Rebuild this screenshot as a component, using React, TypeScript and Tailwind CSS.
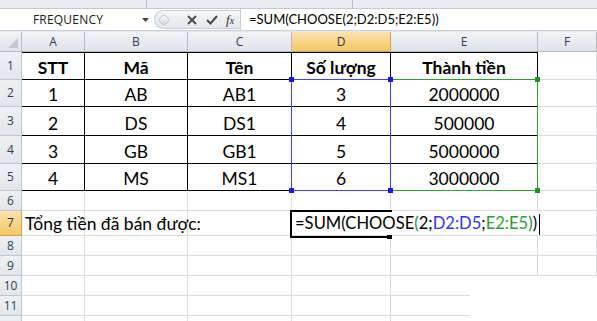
import React from "react";

const cols = [63, 103, 104, 99, 147, 59];
const colNames = ["A", "B", "C", "D", "E", "F"];

type Row = { n: number; h: number; cells?: string[]; bold?: boolean; hideLabel?: boolean };
const rows: Row[] = [
  { n: 1, h: 28, cells: ["STT", "Mã", "Tên", "Số lượng", "Thành tiền"], bold: true },
  { n: 2, h: 27, cells: ["1", "AB", "AB1", "3", "2000000"] },
  { n: 3, h: 29, cells: ["2", "DS", "DS1", "4", "500000"] },
  { n: 4, h: 28, cells: ["3", "GB", "GB1", "5", "5000000"] },
  { n: 5, h: 27, cells: ["4", "MS", "MS1", "6", "3000000"] },
  { n: 6, h: 20 },
  { n: 7, h: 25 },
  { n: 8, h: 20 },
  { n: 9, h: 20 },
  { n: 10, h: 20 },
  { n: 11, h: 20 },
  { n: 12, h: 20, hideLabel: true },
];

const BLUE = "#4141ff";
const GREEN = "#2f9e36";

function Corner({ x, y, c }: { x: number; y: number; c: string }) {
  return (
    <div
      className="absolute z-40 w-[5px] h-[5px]"
      style={{ left: x - 2, top: y - 2, background: c }}
    />
  );
}

function HLine({ x, y, w, c }: { x: number; y: number; w: number; c: string }) {
  return <div className="absolute z-30 h-[1px]" style={{ left: x, top: y, width: w, background: c }} />;
}
function VLine({ x, y, h, c }: { x: number; y: number; h: number; c: string }) {
  return <div className="absolute z-30 w-[1px]" style={{ left: x, top: y, height: h, background: c }} />;
}

function cellStyle(n: number, i: number, inTable: boolean): React.CSSProperties {
  if (!inTable) {
    return { borderRight: "1px solid #dadcdf", borderBottom: "1px solid #dadcdf" };
  }
  const s: React.CSSProperties = {
    borderRight: "1px solid #000",
    borderBottom: "1px solid #000",
  };
  if (n === 1) s.borderTop = "1px solid #000";
  return s;
}

export default function App() {
  return (
    <div className="relative w-[597px] h-[321px] overflow-hidden bg-white font-['Lato',sans-serif] text-black">
      {/* ribbon bottom strip */}
      <div className="flex h-[9px] bg-[#e9ecf0] border-b border-[#c3cad3]">
        <div className="w-[147px] border-r border-[#b6bec8]" />
        <div className="w-[206px] border-r border-[#b6bec8]" />
      </div>
      {/* formula bar */}
      <div className="flex h-[22px] items-center bg-white border-b border-[#c9d0d8]">
        <div className="w-[136px] text-center text-[12px] text-[#1c1c1c] font-['Open_Sans',sans-serif] tracking-[0.2px]">
          FREQUENCY
        </div>
        <div className="w-[18px] flex items-center justify-center">
          <svg width="7" height="4" viewBox="0 0 7 4">
            <path d="M0 0H7L3.5 4Z" fill="#444" />
          </svg>
        </div>
        <div className="h-[19px] w-[86px] flex items-center rounded-l-full bg-gradient-to-b from-[#f4f6f8] to-[#e3e7ec] border border-[#c8ced6] border-r-0">
          <div className="ml-[4px] w-[10px] h-[10px] rounded-full bg-gradient-to-b from-[#f7f8fa] to-[#d3d8de] border border-[#c5cbd3]" />
          <svg className="ml-[18px]" width="10" height="10" viewBox="0 0 10 10">
            <path d="M1 1L9 9M9 1L1 9" stroke="#4b4b4b" strokeWidth="1.8" />
          </svg>
          <svg className="ml-[9px]" width="12" height="10" viewBox="0 0 12 10">
            <path d="M1 5L4.5 8.5L11 1" stroke="#4b4b4b" strokeWidth="2" fill="none" />
          </svg>
          <span className="ml-[8px] text-[13px] italic font-['Liberation_Serif',serif] text-[#333] leading-none">
            f<span className="text-[10px]">x</span>
          </span>
        </div>
        <div className="flex-1 h-full flex items-center pl-[8px] text-[13px] font-['Lato',sans-serif] border-l border-[#c8ced6]">
          =SUM(CHOOSE(2;D2:D5;E2:E5))
        </div>
      </div>
      <div className="h-[1px] bg-[#e4e8ec]" />
      {/* column headers */}
      <div className="flex h-[20px]">
        <div className="relative w-[22px] h-full bg-gradient-to-b from-[#f1f3f6] to-[#dfe3e8] border-r border-b border-[#b3bcc6]">
          <svg className="absolute right-[3px] bottom-[3px]" width="10" height="10" viewBox="0 0 10 10">
            <path d="M10 0V10H0Z" fill="#c2c8d0" />
          </svg>
        </div>
        {cols.map((w, i) => (
          <div
            key={i}
            style={{ width: w }}
            className={
              "h-full flex items-center justify-center text-[12px] font-['Open_Sans',sans-serif] border-r border-b " +
              (i === 3
                ? "bg-gradient-to-b from-[#fbe3ae] to-[#f4c763] border-[#c9a552] text-[#2a3340]"
                : "bg-gradient-to-b from-[#f1f3f6] to-[#dfe3e8] border-[#b3bcc6] text-[#2f3e50]")
            }
          >
            {colNames[i]}
          </div>
        ))}
      </div>
      {/* rows */}
      {rows.map((r) => (
        <div key={r.n} className="flex" style={{ height: r.h }}>
          <div
            className={
              "w-[22px] h-full flex items-center justify-center text-[12px] font-['Open_Sans',sans-serif] border-r border-b " +
              (r.n === 7
                ? "bg-gradient-to-b from-[#fbe3ae] to-[#f4c763] border-[#c9a552] text-[#2a3340]"
                : "bg-gradient-to-b from-[#eef1f4] to-[#e2e6eb] border-[#c0c7d0] text-[#2f3e50]")
            }
          >
            {r.hideLabel ? "" : r.n}
          </div>
          {cols.map((w, i) => {
            const inTable = !!r.cells && i < 5;
            return (
              <div
                key={i}
                style={{ width: w, ...cellStyle(r.n, i, inTable) }}
                className={
                  "h-full flex items-end justify-center pb-[3px] text-[17.5px] leading-none " +
                  (r.bold ? "font-bold" : "")
                }
              >
                {r.cells && i < 5 ? r.cells[i] : ""}
              </div>
            );
          })}
        </div>
      ))}

      {/* row 7 label */}
      <div className="absolute left-[25px] top-[215px] text-[17.5px] leading-none whitespace-nowrap">
        Tổng tiền đã bán được:
      </div>

      {/* range outlines: E2:E5 green, D2:D5 blue */}
      <HLine x={391} y={79} w={147} c={GREEN} />
      <HLine x={391} y={190} w={147} c={GREEN} />
      <VLine x={537} y={79} h={112} c={GREEN} />
      <HLine x={291} y={79} w={100} c={BLUE} />
      <HLine x={291} y={190} w={100} c={BLUE} />
      <VLine x={291} y={79} h={112} c={BLUE} />
      <VLine x={390} y={79} h={112} c={BLUE} />
      <Corner x={537} y={79} c="#21911f" />
      <Corner x={537} y={190} c="#21911f" />
      <Corner x={291} y={79} c="#1616f5" />
      <Corner x={390} y={79} c="#1616f5" />
      <Corner x={291} y={190} c="#1616f5" />
      <Corner x={390} y={190} c="#1616f5" />

      {/* active cell D7 in edit mode */}
      <div className="absolute z-10 left-[290px] top-[210px] w-[102px] h-[28px] border-2 border-black" />
      <div className="absolute z-10 left-[387px] top-[235px] w-[5px] h-[4px] bg-black" />
      <div className="absolute z-10 left-[295px] top-[212px] h-[23px] pr-[2px] flex items-end pb-[3px] bg-white text-[16.6px] leading-none whitespace-nowrap">
        <span>=SUM(CHOOSE</span>
        <span className="text-[#2b8a57]">(</span>
        <span>2;</span>
        <span className="text-[#3434f4]">D2:D5</span>
        <span>;</span>
        <span className="text-[#2f9a36]">E2:E5</span>
        <span className="text-[#2b8a57]">)</span>
        <span>)</span>
        <span className="ml-[2px] w-[1px] h-[21px] bg-black self-end mb-[-3px]" />
      </div>

      {/* cropped white area bottom right */}
      <div className="absolute z-10 left-[482px] top-[276px] right-0 bottom-0 bg-white" />
      <div className="absolute z-10 left-[470px] top-[277px] right-0 bottom-0 bg-white" />
    </div>
  );
}
